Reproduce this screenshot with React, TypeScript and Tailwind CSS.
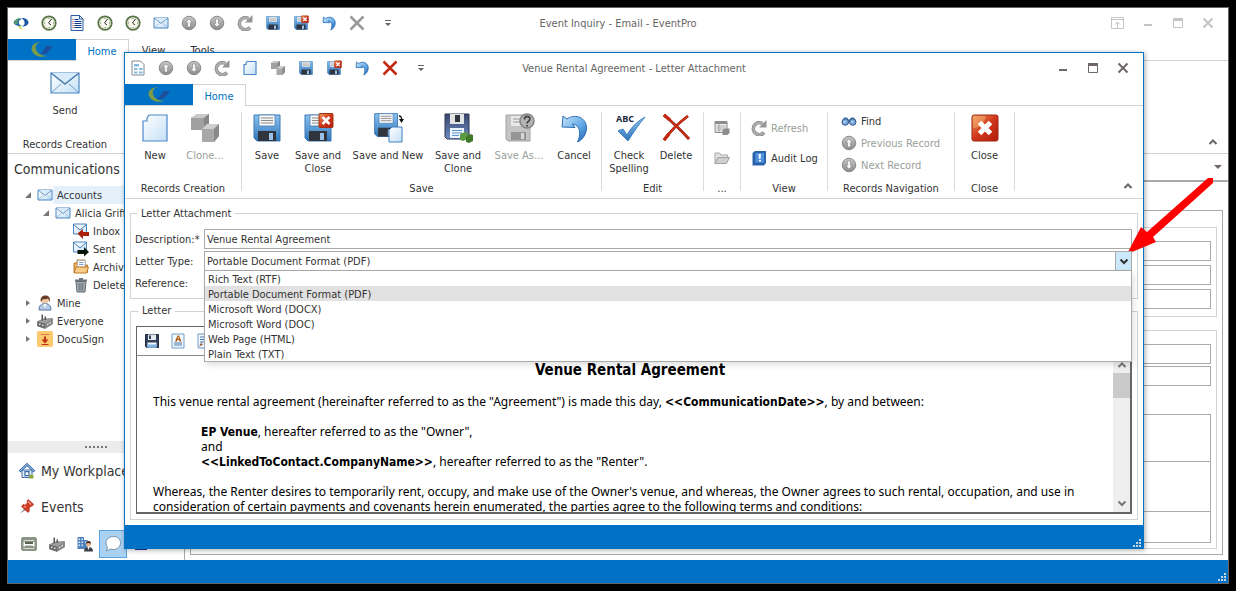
import { ReactNode } from 'react';
import clsx from 'clsx';

interface IconProps {
  size?: number;
  gray?: boolean;
}

interface SvgProps {
  size?: number;
  box?: number;
  children: ReactNode;
}

const Svg = ({ size = 16, box = 32, children }: SvgProps) => (
  <svg width={size} height={size} viewBox={`0 0 ${box} ${box}`} fill="none" aria-hidden="true" className="shrink-0">
    {children}
  </svg>
);

// Gradients shared by every icon on the page
const IconDefs = () => (
  <svg width="0" height="0" className="absolute" aria-hidden="true">
    <defs>
      <linearGradient id="blue" x1="0" y1="0" x2="0" y2="1">
        <stop offset="0" stopColor="#8cc4f2" />
        <stop offset="1" stopColor="#2f74b8" />
      </linearGradient>
      <linearGradient id="sheet" x1="0" y1="0" x2="1" y2="1">
        <stop offset="0" stopColor="#ffffff" />
        <stop offset="1" stopColor="#c4e0f6" />
      </linearGradient>
      <linearGradient id="gray" x1="0" y1="0" x2="0" y2="1">
        <stop offset="0" stopColor="#c8c8c8" />
        <stop offset="1" stopColor="#8a8a8a" />
      </linearGradient>
      <linearGradient id="navy" x1="0" y1="0" x2="0" y2="1">
        <stop offset="0" stopColor="#39456a" />
        <stop offset="1" stopColor="#6d8cc4" />
      </linearGradient>
      <linearGradient id="red" x1="0" y1="0" x2="1" y2="1">
        <stop offset="0" stopColor="#f0a060" />
        <stop offset="0.5" stopColor="#d0351a" />
        <stop offset="1" stopColor="#b01c0c" />
      </linearGradient>
      <linearGradient id="swoosh" x1="0" y1="0" x2="1" y2="1">
        <stop offset="0" stopColor="#c4e4fc" />
        <stop offset="0.6" stopColor="#5ea6e4" />
        <stop offset="1" stopColor="#1c5ca8" />
      </linearGradient>
    </defs>
  </svg>
);

const blueFloppy = (
  <>
    <path d="M3 3h26v26H6l-3-3z" fill="url(#blue)" stroke="#3a76b4" />
    <path d="M8 3h16v11H8z" fill="#f6f6f6" stroke="#3a76b4" strokeWidth="0.7" />
    <path d="M10 6h12M10 8.500h12M10 11h12" stroke="#8c8c8c" />
    <path d="M7 19h18v10H7z" fill="#30343c" />
    <path d="M18 21h4v7h-4z" fill="#9cbfe4" />
  </>
);

const Floppy = ({ size }: IconProps) => <Svg size={size}>{blueFloppy}</Svg>;

const FloppyClose = ({ size }: IconProps) => (
  <Svg size={size}>
    {blueFloppy}
    <rect x="17" y="1.500" width="14" height="14" rx="1" fill="url(#red)" stroke="#a33010" />
    <path d="M20.500 5l7 7M27.500 5l-7 7" stroke="#fff" strokeWidth="2.600" />
  </Svg>
);

const FloppyNew = ({ size }: IconProps) => (
  <Svg size={size}>
    <g transform="translate(0 -1) scale(.88)">{blueFloppy}</g>
    <path d="M20 15h10v15H17V18z" fill="url(#sheet)" stroke="#3f7cc0" />
    <path d="M27 4q3 0 2.500 4" stroke="#111" strokeWidth="1.400" />
    <path d="M27 7h5l-2.500 4z" fill="#111" />
  </Svg>
);

const FloppyClone = ({ size }: IconProps) => (
  <Svg size={size}>
    <path d="M3 2h24v25H5l-2-2z" fill="url(#navy)" stroke="#2c3658" />
    <path d="M8 2h14v10H8z" fill="#e4e4e4" />
    <path d="M13 3h5v7h-5z" fill="#30343c" />
    <path d="M8 16h14v10H8z" fill="#eef5fc" />
    <path d="M10 18.500h10M10 21h10M10 23.500h7" stroke="#5e95d0" />
    <path d="M18 22l5-2 3 1v6l-5 2-3-1z" fill="#5b9a40" />
    <path d="M24 25l4-3 3 1v6l-4 2-3-1z" fill="#3f7a2a" />
  </Svg>
);

const FloppyAsk = ({ size }: IconProps) => (
  <Svg size={size}>
    <path d="M3 3h24v26H5l-2-2z" fill="#c4c4c4" stroke="#a2a2a2" />
    <path d="M8 4h14v10H8z" fill="#e9e9e9" />
    <path d="M10 7h9M10 10h9" stroke="#9a9a9a" />
    <path d="M8 20h15v8H8z" fill="#959595" />
    <path d="M18 21h3v6h-3z" fill="#d8d8d8" />
    <circle cx="24" cy="9" r="7" fill="#b4b4b4" stroke="#848484" strokeWidth="1.500" />
    <path d="M21.500 7.500q0-3 2.700-3t2.600 2.600q0 1.600-1.500 2.400-1.200.7-1.200 2M24.100 13v1.600" stroke="#444" strokeWidth="1.800" />
  </Svg>
);

const FloppyDark = ({ size }: IconProps) => (
  <Svg size={size}>
    <path d="M3 3h26v26H5l-2-2z" fill="#33415a" stroke="#222c40" strokeWidth="2" />
    <path d="M8 3h16v11H8z" fill="#e6e9ee" />
    <path d="M10 5h4v7h-4z" fill="#33415a" />
    <path d="M7 19h18v10H7z" fill="#f5f8fc" />
    <path d="M7 23h18v6H7z" fill="#7db4e6" />
  </Svg>
);

const Undo = ({ size }: IconProps) => (
  <Svg size={size}>
    <path
      d="M4 15L5 4l4 3C18 1 28.500 6 28.500 16c0 6-4 12-9 14C23 23 23 13 14.500 12L17 15.500z"
      fill="url(#swoosh)"
      stroke="#2c6cb4"
      strokeLinejoin="round"
      strokeWidth={size ? 1 : 1.6}
    />
  </Svg>
);

const Cross = ({ size, gray }: IconProps) => (
  <Svg size={size}>
    {size ? (
      <>
        <path d="M4 3C11 9 21 18 29 27M28 4C20 10 9 21 4 28" stroke="#7d1408" strokeWidth="2.800" />
        <path d="M4 3C11 9 21 18 29 27M28 4C20 10 9 21 4 28" stroke="#d83014" strokeWidth="1.600" />
        <path d="M4 3l6 5M4 28l5-6" stroke="#c42810" strokeWidth="3.500" />
      </>
    ) : (
      <path d="M3 3l26 26M29 3L3 29" stroke={gray ? '#999' : '#c42a12'} strokeWidth="5" />
    )}
  </Svg>
);

const ArrowDisc = ({ down = false }: { down?: boolean }) => (
  <Svg>
    <circle cx="16" cy="16" r="13.500" fill="url(#gray)" stroke="#8a8a8a" strokeWidth="2" />
    <path
      d={down ? 'M16 24l-7-7h4V8h6v9h4z' : 'M16 8l7 7h-4v9h-6v-9H9z'}
      fill="#f3f3f3"
      stroke="#7a7a7a"
    />
  </Svg>
);

const Refresh = () => (
  <Svg>
    <path d="M26 25A12 12 0 1 1 23 7" stroke="#858585" strokeWidth="7" />
    <path d="M26 25A12 12 0 1 1 23 7" stroke="#adadad" strokeWidth="4.500" />
    <path d="M31 0v15H16z" fill="#959595" />
  </Svg>
);

const Sheet = ({ size }: IconProps) => (
  <Svg size={size}>
    <path d="M10 3h18v26H4V9h4V6l2-3z" fill="url(#sheet)" stroke="#4c88c8" strokeWidth={size ? 1.2 : 2.4} />
  </Svg>
);

const Cubes = ({ size }: IconProps) => (
  <Svg size={size}>
    <path d="M2 6l6-4h12v11l-5 5H2z" fill="#a0a0a0" />
    <path d="M2 6l6-4h12l-5 4z" fill="#c9c9c9" />
    <path d="M15 6l5-4v11l-5 5z" fill="#868686" />
    <path d="M13 17l5-5h12v12l-5 6H13z" fill="#a8a8a8" />
    <path d="M13 17l5-5h12l-5 5z" fill="#cecece" />
    <path d="M25 17l5-5v12l-5 6z" fill="#8a8a8a" />
  </Svg>
);

const Envelope = ({ size = 16 }: IconProps) => (
  <Svg size={size}>
    <path d="M2 6h28v20H2z" fill="url(#sheet)" stroke="#4a86c0" strokeWidth={size > 20 ? 1.2 : 2} />
    <path d="M3 25l9-8M29 25l-9-8" stroke="#6f9fce" />
    <path d="M2 6l14 11L30 6" fill="#d8ebfa" stroke="#4a7cae" strokeWidth="1.500" />
  </Svg>
);

const EnvelopeArrow = ({ out = false }: { out?: boolean }) => (
  <Svg>
    <path d="M1 2h26v20H1z" fill="url(#sheet)" stroke="#4a86c0" strokeWidth="2" />
    <path d="M1 3l13 11L27 3" stroke="#4a7cae" strokeWidth="2" />
    <path
      d={out ? 'M32 22L22 12v6H9v8h13v5z' : 'M9 21l11-9v6h12v8H20v6z'}
      fill={out ? '#0a140a' : '#a8200c'}
    />
  </Svg>
);

const Clock = () => (
  <Svg>
    <circle cx="16" cy="16" r="13.500" fill="#f8f8ee" stroke="#5c7548" strokeWidth="3.500" />
    <circle cx="16" cy="16" r="10.500" stroke="#a9b894" />
    <path d="M21 8l-6 8 5 4" stroke="#333" strokeWidth="2" />
    <path d="M16 6v2M16 24v2M6 16h2M24 16h2" stroke="#666" strokeWidth="1.500" />
  </Svg>
);

const ListDoc = () => (
  <Svg>
    <path d="M4 1h17l7 7v23H4z" fill="#f4f9fe" stroke="#2b5ca4" strokeWidth="2" />
    <path d="M21 1v7h7" stroke="#2b5ca4" strokeWidth="2" />
    <path d="M11 9h8M11 13h14M11 17h14M11 21h14M11 25h14" stroke="#143c8c" strokeWidth="2" />
    <path d="M7 9h2M7 13h2M7 17h2M7 21h2M7 25h2" stroke="#b03020" strokeWidth="2" />
  </Svg>
);

const EditDoc = () => (
  <Svg>
    <path d="M4 2h24v28H4z" fill="#f2f8fe" stroke="#6f9cc8" strokeWidth="2" />
    <path d="M8 8h14M8 13h14M8 18h10" stroke="#4878b0" strokeWidth="2" />
    <path d="M6 27l4-7 4 3z" fill="#8c4a24" />
  </Svg>
);

const FormDoc = () => (
  <Svg>
    <path d="M4 2h17l7 7v21H4z" fill="#fff" stroke="#7f8a90" strokeWidth="2" />
    <path d="M8 8h10v5H8zM8 16h7v4H8zM18 16h7v4h-7zM8 23h7v4H8zM18 23h7v4h-7z" fill="#86b9e0" />
  </Svg>
);

const Swirl = () => (
  <Svg>
    <path d="M1 15C4 8 14 5 21 8c-7 0-10 4-9 8 1 3 4 5 8 5-10 2-17 0-19-6z" fill="#2a6cb0" />
    <path d="M17 6c8-1 14 4 14 9s-6 8-14 8c5-2 7-5 6-9-1-4-3-6-6-8z" fill="#1c58a0" />
    <path d="M1 15C3 9 9 6 15 6 9 9 8 14 9 18c-4 0-7-1-8-3z" fill="#5c9c6c" />
    <path d="M13 13c2-3 8-2 9 1s-2 7-6 7c-3-1-5-5-3-8z" fill="#fff" />
    <path d="M10 22c2 5 6 7 11 7-4-2-6-4-6-7z" fill="#d4d040" />
  </Svg>
);

const TabLogo = () => (
  <svg width="24" height="18" viewBox="0 0 24 18" aria-hidden="true">
    <path d="M11 1C5 1 0 5 2 10c2 5 9 7 15 5-6 0-10-3-11-7C5 5 7 2 11 1z" fill="#7e9c48" />
    <path d="M14 9l2-4h7l-3 4zM10 13l4-4h6l-4 4z" fill="#1c4f9c" />
  </svg>
);

const CloseTile = () => (
  <Svg size={32}>
    <rect x="3" y="3" width="26" height="26" rx="2" fill="url(#red)" stroke="#9c2410" />
    <path d="M4 16q10 1 13-12H4z" fill="#f4b070" opacity=".5" />
    <path d="M10.500 10.500l11 11M21.500 10.500l-11 11" stroke="#fff" strokeWidth="5" />
  </Svg>
);

const SpellCheck = () => (
  <svg width="32" height="32" viewBox="0 0 32 32" aria-hidden="true">
    <text x="3" y="10" fontSize="9" fontWeight="bold" fill="#1c2740" fontFamily="Open Sans, sans-serif">ABC</text>
    <path d="M5 19l5-2 4 6C19 14 25 9 32 5 26 12 20 21 15 29z" fill="url(#blue)" stroke="#3f80c4" />
  </svg>
);

const Binoculars = () => (
  <Svg>
    <path d="M6 9h6l3 4h2l3-4h6l4 9H2z" fill="#4470a4" />
    <circle cx="8.500" cy="18" r="6.500" fill="#7aa9dc" stroke="#34578a" strokeWidth="2" />
    <circle cx="23.500" cy="18" r="6.500" fill="#7aa9dc" stroke="#34578a" strokeWidth="2" />
    <path d="M6 16h3v3H6zM21 16h3v3h-3z" fill="#d4e8fa" />
  </Svg>
);

const AuditBook = () => (
  <Svg>
    <path d="M3 6l5-4h22v24l-4 5H3z" fill="#2d64ac" />
    <path d="M8 5h19v21H8z" fill="#4f92dc" stroke="#1f4f92" />
    <path d="M15 8h5l-1 10h-3zM16 20h4v3h-4z" fill="#fff" />
  </Svg>
);

const GrayTable = () => (
  <Svg>
    <path d="M2 3h24v22H2z" fill="#eee" stroke="#8c8c8c" strokeWidth="2" />
    <path d="M2 3h24v5H2z" fill="#8c8c8c" />
    <path d="M5 12h18M5 16h18M5 20h12M10 8v16" stroke="#9c9c9c" strokeWidth="1.500" />
    <path d="M17 20l4-3h10v9l-4 4H17z" fill="#8c8c8c" />
  </Svg>
);

const GrayFolder = () => (
  <Svg>
    <path d="M2 27V6h9l3 4h13v5" fill="#e2e2e2" stroke="#a6a6a6" strokeWidth="2" />
    <path d="M2 27l6-12h23l-6 12z" fill="#cfcfcf" stroke="#a0a0a0" strokeWidth="2" />
  </Svg>
);

const OrangeFolder = () => (
  <Svg>
    <path d="M2 27V8h6v-6h16v10h5v15z" fill="#f0b060" stroke="#bc7a2c" strokeWidth="2" />
    <path d="M9 3h15v13H9z" fill="#fff" stroke="#7a9ec4" />
    <path d="M12 7h9M12 11h9" stroke="#7aa4d4" strokeWidth="2" />
    <path d="M2 28l4-12h25l-4 12z" fill="#f8cc88" stroke="#bc7a2c" strokeWidth="2" />
  </Svg>
);

const Bin = () => (
  <Svg>
    <path d="M6 9h20l-2 21H8z" fill="#a4acb2" stroke="#5f686e" strokeWidth="2" />
    <path d="M4 5h24v4H4zM12 2h8v3h-8z" fill="#6c757c" />
    <path d="M12 12l1 15M16 12v15M20 12l-1 15" stroke="#5f686e" strokeWidth="1.600" />
  </Svg>
);

const Person = () => (
  <Svg>
    <path d="M4 30c0-9 5-13 12-13s12 4 12 13z" fill="#b9cce6" stroke="#5473a0" strokeWidth="2" />
    <circle cx="16" cy="10" r="7" fill="#eec8a4" />
    <path d="M8 15C5 4 12 1 17 1s11 3 8 14c-1-4-2-6-3-8-4 2-9 1-11 2-1 2-2 3-3 6z" fill="#6c3c28" />
    <path d="M13 18l3 8 3-8z" fill="#fff" />
  </Svg>
);

const Factory = () => (
  <Svg>
    <path d="M1 17l12-5 18-1v11l-15 9-15-5z" fill="#a0a0a0" stroke="#555" />
    <path d="M1 17l15 4v10L1 26z" fill="#6a6a6a" />
    <path d="M16 21l15-10v11l-15 9z" fill="#888" />
    <path d="M9 3h3v12H9zM15 7h3v7h-3z" fill="#555" />
    <path d="M4 21h3v3H4zM10 23h3v3h-3zM20 22l3-2v3l-3 2zM25 19l3-2v3l-3 2z" fill="#e2e2e2" />
  </Svg>
);

const DocuSign = () => (
  <Svg>
    <rect x="0" y="0" width="32" height="32" rx="3" fill="#fccb70" />
    <path d="M7 7h18" stroke="#dc8050" strokeWidth="2" />
    <path d="M14 11h4v6h5l-7 8-7-8h5zM9 26h14v2H9z" fill="#c03018" />
  </Svg>
);

const House = () => (
  <Svg>
    <path d="M6 14h20v15H6z" fill="#e4effa" stroke="#3c6ca8" strokeWidth="2" />
    <path d="M1 17L16 3l15 14" stroke="#3c6ca8" strokeWidth="5" />
    <path d="M1 17L16 3l15 14" stroke="#a4c8ec" strokeWidth="2" />
    <path d="M12 17h8v8h-8z" fill="#fff" stroke="#3c6ca8" strokeWidth="2.500" />
    <path d="M20 24h9v7h-9z" fill="#8ea83c" />
  </Svg>
);

const Pin = () => (
  <Svg>
    <path d="M2 29l10-11 3 3z" fill="#8c8c8c" />
    <path d="M18 1l11 9-2 4-4 1-3 5 1 4-3 3L5 15l3-4 5 1 4-5-1-3z" fill="#d43c24" stroke="#941c10" />
    <path d="M18 5l6 6M10 14l4 3" stroke="#f49c84" strokeWidth="2.500" />
  </Svg>
);

const Bed = () => (
  <Svg>
    <rect x="1" y="3" width="30" height="26" rx="3" fill="#8b9484" stroke="#59624f" />
    <path d="M5 8h22v2H5zM5 24h22v2H5z" fill="#d6dccf" />
    <path d="M5 12h3v9H5zM24 12h3v9h-3zM8 16h16v3H8z" fill="#fff" />
    <path d="M8 12h16v4H8z" fill="#59624f" />
  </Svg>
);

const Office = () => (
  <Svg>
    <path d="M1 2h13v24H1zM14 8h7v18h-7z" fill="#4f81bc" />
    <path d="M3 5h3v3H3zM9 5h3v3H9zM3 11h3v3H3zM9 11h3v3H9zM3 17h3v3H3zM9 17h3v3H9zM16 11h3v3h-3z" fill="#dcecfa" />
    <circle cx="23" cy="16" r="5" fill="#e8b48c" />
    <path d="M18 15q0-5 5-5t5 5q-5-2-10 0z" fill="#3c2418" />
    <path d="M14 31q0-9 9-9t9 9z" fill="#3a3f48" />
    <path d="M21 22l2 6 2-6z" fill="#fff" />
  </Svg>
);

const Bubble = () => (
  <Svg>
    <path d="M17 1c8 0 14 5 14 12.500S25 27 17 27c-2 0-4 0-6-1l-8 4 2-8C3 20 2 17 2 13.500 2 6 9 1 17 1z" fill="#fff" stroke="#5c7890" strokeWidth="1.500" />
  </Svg>
);

const FontDoc = () => (
  <Svg>
    <path d="M4 2h24v28H4z" fill="#f2f8fe" stroke="#6f9cc8" strokeWidth="2" />
    <path d="M15 5h3l5 12h-4l-1-3h-3l-1 3h-4zM15 11h3l-1.500-4z" fill="#b05c10" />
    <path d="M8 20h16M8 24h16" stroke="#4878b0" strokeWidth="2" />
  </Svg>
);

const Minimize = () => (
  <Svg size={12} box={12}>
    <path d="M2 7h8v2H2z" fill="currentColor" />
  </Svg>
);

const Maximize = () => (
  <Svg size={12} box={12}>
    <path d="M1.500 1.500h9v9h-9z" stroke="currentColor" />
    <path d="M1 1h10v3H1z" fill="currentColor" />
  </Svg>
);

const CloseX = () => (
  <Svg size={12} box={12}>
    <path d="M1.500 1.500l9 9M10.500 1.500l-9 9" stroke="currentColor" strokeWidth="2" />
  </Svg>
);

const Restore = () => (
  <Svg size={14} box={14}>
    <path d="M.5 1.500h12v11H.5zM.5 3.500h12M6.500 12V6M4 8.500L6.500 6 9 8.500" stroke="currentColor" />
  </Svg>
);

const QuickMore = () => (
  <Svg size={8} box={8}>
    <path d="M1 1h6v1H1zM1 4h6L4 7z" fill="#666" />
  </Svg>
);

const Chevron = ({ up = false }: { up?: boolean }) => (
  <Svg size={10} box={10}>
    <path d={up ? 'M1.500 7L5 3.500 8.500 7' : 'M1.500 3.500L5 7l3.500-3.500'} stroke="currentColor" strokeWidth="2" />
  </Svg>
);

const Grip = () => (
  <Svg size={8} box={8}>
    <path d="M6 0h2v2H6zM3 3h2v2H3zM6 3h2v2H6zM0 6h2v2H0zM3 6h2v2H3zM6 6h2v2H6z" fill="#c9d6de" />
  </Svg>
);

interface TitleBarProps {
  title: string;
  icons: { name: string; icon: ReactNode }[];
  controls: { name: string; icon: ReactNode }[];
  active?: boolean;
}

const TitleBar = ({ title, icons, controls, active = false }: TitleBarProps) => (
  <header className="grid h-[31px] shrink-0 grid-cols-[1fr_auto_1fr] items-center">
    <div className="flex items-center pb-px">
      {icons.map(({ name, icon }, i) => (
        <button key={i} aria-label={name} className="flex w-7 justify-start pl-[5px]">
          {icon}
        </button>
      ))}
      <button aria-label="Customize toolbar" className="flex w-8 justify-center">
        <QuickMore />
      </button>
    </div>
    <h1 className="text-[#666]">{title}</h1>
    <div className={clsx('flex justify-end pr-[5px] pb-px', active ? 'text-[#6f6767]' : 'text-[#c4c4c4]')}>
      {controls.map(({ name, icon }) => (
        <button key={name} aria-label={name} className="flex w-[30px] items-center justify-center">
          {icon}
        </button>
      ))}
    </div>
  </header>
);

interface TabStripProps {
  tabs: string[];
}

const TabStrip = ({ tabs }: TabStripProps) => (
  <nav className="flex h-[22px] shrink-0 border-b border-[#d2d2d2]">
    <button aria-label="Application menu" className="flex w-[68px] items-center justify-center bg-[#0072c6]">
      <TabLogo />
    </button>
    {tabs.map((tab, i) => (
      <button
        key={tab}
        className={clsx(
          'flex h-[22px] items-center justify-center pt-px',
          i === 0 ? 'w-[53px] border-t border-r border-[#d2d2d2] bg-white text-[#0072c6]' : 'w-[49px]',
        )}
      >
        {tab}
      </button>
    ))}
  </nav>
);

interface RibbonGroupProps {
  caption: string;
  className?: string;
  children: ReactNode;
}

const RibbonGroup = ({ caption, className, children }: RibbonGroupProps) => (
  <section className={clsx('flex shrink-0 flex-col justify-between border-r border-[#dcdcdc]', className)}>
    {children}
    <h2 className="-mb-1 text-center leading-[13px]">{caption}</h2>
  </section>
);

interface BigButtonProps {
  icon: ReactNode;
  label: string;
  className: string;
  disabled?: boolean;
}

const BigButton = ({ icon, label, className, disabled }: BigButtonProps) => (
  <button disabled={disabled} className={clsx('flex flex-col items-center gap-[5px] text-center leading-[13px] disabled:text-[#9aa09a]', className)}>
    {icon}
    <span>{label}</span>
  </button>
);

interface SmallButtonProps {
  icon: ReactNode;
  label: string;
  disabled?: boolean;
}

const SmallButton = ({ icon, label, disabled }: SmallButtonProps) => (
  <button disabled={disabled} className="flex h-4 items-center gap-1 whitespace-nowrap disabled:text-[#9aa09a]">
    {icon}
    <span>{label}</span>
  </button>
);

const tree = [
  { label: 'Accounts', level: 0, icon: <Envelope />, state: 'open', selected: true },
  { label: 'Alicia Griffin', level: 1, icon: <Envelope />, state: 'open' },
  { label: 'Inbox', level: 2, icon: <EnvelopeArrow /> },
  { label: 'Sent', level: 2, icon: <EnvelopeArrow out /> },
  { label: 'Archive', level: 2, icon: <OrangeFolder /> },
  { label: 'Deleted', level: 2, icon: <Bin /> },
  { label: 'Mine', level: 0, icon: <Person />, state: 'closed' },
  { label: 'Everyone', level: 0, icon: <Factory />, state: 'closed' },
  { label: 'DocuSign', level: 0, icon: <DocuSign />, state: 'closed' },
];

const indent = ['pl-4', 'pl-[34px]', 'pl-[52px]'];

const Sidebar = () => (
  <aside className="flex w-[177px] shrink-0 flex-col border-r border-[#aaa]">
    <h2 className="px-1.5 pt-[5px] pb-px text-[14px] leading-5">Communications</h2>
    <ul className="flex-1 pt-1.5">
      {tree.map(({ label, level, icon, state, selected }) => (
        <li key={label} className={clsx('flex h-[18px] items-center', indent[level])}>
          <span className="flex w-[13px] shrink-0 pl-px">
            {state && (
              <Svg size={6} box={6}>
                <path d={state === 'open' ? 'M6 0v6H0z' : 'M1 0l4 3-4 3z'} fill="#777" />
              </Svg>
            )}
          </span>
          {icon}
          <span className={clsx('flex h-full flex-1 items-center pl-1', selected && 'bg-[#e4f1fb]')}>{label}</span>
        </li>
      ))}
    </ul>
    <div className="flex h-3 items-center justify-center gap-0.5 bg-[#ececec]">
      {[0, 1, 2, 3, 4, 5].map((dot) => (
        <span key={dot} className="size-0.5 bg-[#777]" />
      ))}
    </div>
    <button className="flex h-9 items-center gap-1.5 pl-[11px] text-[14px]">
      <House />
      My Workplace
    </button>
    <button className="flex h-9 items-center gap-1.5 pl-[11px] text-[14px]">
      <Pin />
      Events
    </button>
    <div className="flex h-[35px] items-center pt-0.5 pl-[7px]">
      {[<Bed />, <Factory />, <Office />, <Bubble />].map((icon, i) => (
        <button
          key={i}
          aria-label={['Rooms', 'Companies', 'Contacts', 'Communications'][i]}
          className={clsx('flex size-7 items-center justify-center', i === 3 && 'border border-[#5aa5e6] bg-[#a9d1f2]')}
        >
          {icon}
        </button>
      ))}
      <span className="ml-2 size-3 bg-[#2c3c9c]" />
    </div>
  </aside>
);

const mainQuick = [
  { name: 'EventPro', icon: <Swirl /> },
  { name: 'Recent', icon: <Clock /> },
  { name: 'Report', icon: <ListDoc /> },
  { name: 'Reminders', icon: <Clock /> },
  { name: 'Schedule', icon: <Clock /> },
  { name: 'Email', icon: <Envelope /> },
  { name: 'Previous', icon: <ArrowDisc /> },
  { name: 'Next', icon: <ArrowDisc down /> },
  { name: 'Refresh', icon: <Refresh /> },
  { name: 'Save', icon: <Floppy /> },
  { name: 'Save and Close', icon: <FloppyClose /> },
  { name: 'Undo', icon: <Undo /> },
  { name: 'Delete', icon: <Cross gray /> },
];

const dialogQuick = [
  { name: 'Form', icon: <FormDoc /> },
  { name: 'Previous', icon: <ArrowDisc /> },
  { name: 'Next', icon: <ArrowDisc down /> },
  { name: 'Refresh', icon: <Refresh /> },
  { name: 'New', icon: <Sheet /> },
  { name: 'Clone', icon: <Cubes /> },
  { name: 'Save', icon: <Floppy /> },
  { name: 'Save and Close', icon: <FloppyClose /> },
  { name: 'Cancel', icon: <Undo /> },
  { name: 'Delete', icon: <Cross /> },
];

const windowControls = [
  { name: 'Minimize', icon: <Minimize /> },
  { name: 'Maximize', icon: <Maximize /> },
  { name: 'Close window', icon: <CloseX /> },
];

const MainWindow = () => (
  <div className="flex min-h-0 flex-1 flex-col border border-[#666] bg-white">
    <TitleBar
      title="Event Inquiry - Email - EventPro"
      icons={mainQuick}
      controls={[{ name: 'Full screen', icon: <Restore /> }, ...windowControls]}
    />
    <TabStrip tabs={['Home', 'View', 'Tools']} />
    <div className="flex h-[93px] shrink-0 items-end justify-between border-b border-[#d2d2d2] pt-1.5">
      <div className="flex h-full w-[114px] flex-col items-center justify-between">
        <BigButton icon={<Envelope size={32} />} label="Send" className="w-12" />
        <span className="pb-0.5">Records Creation</span>
      </div>
      <span className="p-2.5 pb-1.5 text-[#666]">
        <Chevron up />
      </span>
    </div>
    <div className="flex min-h-0 flex-1">
      <Sidebar />
      <main className="flex flex-1 flex-col">
        <div className="flex h-7 shrink-0 items-center justify-end border-b-2 border-[#aaa] pr-1.5">
          <Svg size={8} box={8}>
            <path d="M0 2h8L4 6z" fill="#6f6767" />
          </Svg>
        </div>
        <div className="mx-[5px] mt-7 mb-[5px] flex flex-1 flex-col gap-[13px] border border-[#aaa] px-[5px] pt-4 pb-[5px]">
          <div className="flex flex-col gap-1 border border-[#d2d2d2] px-[5px] pt-[13px] pb-[7px]">
            <input aria-label="From" className="h-5 border border-[#aaa]" />
            <input aria-label="To" className="h-5 border border-[#aaa]" />
            <input aria-label="Subject" className="h-5 border border-[#aaa]" />
          </div>
          <div className="flex flex-1 flex-col border border-[#d2d2d2] px-[5px] pt-[13px] pb-[5px]">
            <input aria-label="Category" className="h-5 shrink-0 border border-[#aaa]" />
            <input aria-label="Status" className="mt-0.5 h-5 shrink-0 border border-[#aaa]" />
            <div className="mt-7 grid flex-1 grid-rows-[47px_50px_1fr] divide-y divide-[#aaa] border border-[#aaa]">
              <div />
              <div />
              <div />
            </div>
          </div>
        </div>
      </main>
    </div>
    <footer className="flex h-[23px] shrink-0 items-end justify-end bg-[#0072c6] p-0.5">
      <Grip />
    </footer>
  </div>
);

const letterTypes = [
  'Rich Text (RTF)',
  'Portable Document Format (PDF)',
  'Microsoft Word (DOCX)',
  'Microsoft Word (DOC)',
  'Web Page (HTML)',
  'Plain Text (TXT)',
];

const LetterForm = () => (
  <fieldset className="mx-[5px] mt-2 h-[92px] border border-[#d2d2d2] pt-[9px] pr-[5px] pl-1">
    <legend className="ml-0.5 px-1 leading-[13px]">Letter Attachment</legend>
    <div className="grid grid-cols-[69px_1fr] items-center gap-y-0.5">
      <label htmlFor="description">Description:*</label>
      <input id="description" defaultValue="Venue Rental Agreement" className="h-5 border border-[#aaa] px-0.5" />
      <label htmlFor="letter-type">Letter Type:</label>
      <div className="relative z-10">
        <select
          id="letter-type"
          defaultValue={letterTypes[1]}
          className="block h-5 w-full appearance-none border border-[#aaa] bg-white px-0.5"
        >
          {letterTypes.map((type) => (
            <option key={type}>{type}</option>
          ))}
        </select>
        <span className="pointer-events-none absolute inset-y-0 right-0 flex w-[17px] items-center justify-center border border-[#aaa] bg-[#cce8fb] text-[#333]">
          <Chevron />
        </span>
        <ul className="absolute top-full right-0 left-0 border border-t-0 border-[#aaa] bg-white shadow-[2px_3px_6px_rgba(0,0,0,0.12)]">
          {letterTypes.map((type, i) => (
            <li key={type} className={clsx('h-[15px] px-[3px] leading-[17px]', i === 1 && 'bg-[#e1e1e1]')}>
              {type}
            </li>
          ))}
        </ul>
      </div>
      <label htmlFor="reference">Reference:</label>
      <input id="reference" className="h-5 border border-[#aaa] px-0.5" />
    </div>
  </fieldset>
);

const LetterEditor = () => (
  <fieldset className="mx-[5px] mt-[5px] mb-[5px] flex min-h-0 flex-1 flex-col border border-[#d2d2d2] px-[5px] pt-2 pb-[5px]">
    <legend className="ml-0.5 px-1 leading-[14px]">Letter</legend>
    <div className="flex min-h-0 flex-1 flex-col border border-r-2 border-b-2 border-[#666]">
      <div className="flex h-7 shrink-0 items-center gap-2.5 pl-[7px]">
        <button aria-label="Save letter"><FloppyDark /></button>
        <button aria-label="Font"><FontDoc /></button>
        <button aria-label="Edit"><EditDoc /></button>
      </div>
      <div className="flex min-h-0 flex-1 border-t border-[#888]">
        <article className="min-h-0 flex-1 overflow-hidden px-4 pt-1 font-['Noto_Sans',sans-serif] text-[12px] leading-[15px] text-black [&_b]:font-['DejaVu_Sans_Condensed',sans-serif]">
          <h2 className="mb-3.5 pl-2.5 text-center font-['DejaVu_Sans_Condensed',sans-serif] text-[15px] leading-5 font-bold">Venue Rental Agreement</h2>
          <p className="mb-[15px] h-[15px]">
            This venue rental agreement (hereinafter referred to as the "Agreement") is made this day, <b>&lt;&lt;CommunicationDate&gt;&gt;</b>, by and between:
          </p>
          <p className="h-[15px] pl-12">
            <b>EP Venue</b>, hereafter referred to as the "Owner",
          </p>
          <p className="h-[15px] pl-12">and</p>
          <p className="mb-[15px] h-[15px] pl-12">
            <b>&lt;&lt;LinkedToContact.CompanyName&gt;&gt;</b>, hereafter referred to as the "Renter".
          </p>
          <p>
            Whereas, the Renter desires to temporarily rent, occupy, and make use of the Owner's venue, and whereas, the Owner agrees to such rental, occupation, and use in
            consideration of certain payments and covenants herein enumerated, the parties agree to the following terms and conditions:
          </p>
        </article>
        <div className="flex w-[17px] flex-col items-center bg-[#efefef] py-1 text-[#777]">
          <Chevron up />
          <div className="mt-[3px] h-[25px] w-full bg-[#cacaca]" />
          <div className="mt-auto">
            <Chevron />
          </div>
        </div>
      </div>
    </div>
  </fieldset>
);

const Ribbon = () => (
  <div className="flex h-[93px] shrink-0 border-b border-[#d2d2d2] pt-1.5 pb-[7px]">
    <RibbonGroup caption="Records Creation" className="w-[117px]">
      <div className="flex pl-[5px]">
        <BigButton icon={<Sheet size={32} />} label="New" className="w-[50px]" />
        <BigButton icon={<Cubes size={32} />} label="Clone..." className="w-[50px]" disabled />
      </div>
    </RibbonGroup>
    <RibbonGroup caption="Save" className="w-[360px]">
      <div className="flex pl-0.5">
        <BigButton icon={<Floppy size={32} />} label="Save" className="w-[46px]" />
        <BigButton icon={<FloppyClose size={32} />} label="Save and Close" className="w-[56px]" />
        <BigButton icon={<FloppyNew size={32} />} label="Save and New" className="w-[84px]" />
        <BigButton icon={<FloppyClone size={32} />} label="Save and Clone" className="w-[56px]" />
        <BigButton icon={<FloppyAsk size={32} />} label="Save As..." className="w-[66px]" disabled />
        <BigButton icon={<Undo size={32} />} label="Cancel" className="w-[44px]" />
      </div>
    </RibbonGroup>
    <RibbonGroup caption="Edit" className="w-[102px]">
      <div className="flex pl-1">
        <BigButton icon={<SpellCheck />} label="Check Spelling" className="w-[46px]" />
        <BigButton icon={<Cross size={32} />} label="Delete" className="w-[48px]" />
      </div>
    </RibbonGroup>
    <RibbonGroup caption="..." className="w-[37px]">
      <div className="flex flex-col items-center gap-3.5 pt-2">
        <button aria-label="Layout" disabled><GrayTable /></button>
        <button aria-label="Open" disabled><GrayFolder /></button>
      </div>
    </RibbonGroup>
    <RibbonGroup caption="View" className="w-[87px]">
      <div className="flex flex-col gap-3.5 pt-2 pl-2.5">
        <SmallButton icon={<Refresh />} label="Refresh" disabled />
        <SmallButton icon={<AuditBook />} label="Audit Log" />
      </div>
    </RibbonGroup>
    <RibbonGroup caption="Records Navigation" className="w-[127px]">
      <div className="flex flex-col gap-1.5 pt-px pl-[13px]">
        <SmallButton icon={<Binoculars />} label="Find" />
        <SmallButton icon={<ArrowDisc />} label="Previous Record" disabled />
        <SmallButton icon={<ArrowDisc down />} label="Next Record" disabled />
      </div>
    </RibbonGroup>
    <RibbonGroup caption="Close" className="w-[60px]">
      <BigButton icon={<CloseTile />} label="Close" className="w-full" />
    </RibbonGroup>
    <button aria-label="Collapse ribbon" className="ml-auto self-end pr-2.5 text-[#666]">
      <Chevron up />
    </button>
  </div>
);

const LetterDialog = () => (
  <div
    role="dialog"
    aria-label="Letter Attachment"
    className="absolute top-[52px] right-[92px] bottom-[42px] left-[124px] flex flex-col border border-b-0 border-[#0072c6] bg-white shadow-[1px_1px_5px_rgba(0,0,0,0.35)]"
  >
    <TitleBar title="Venue Rental Agreement - Letter Attachment" icons={dialogQuick} controls={windowControls} active />
    <TabStrip tabs={['Home']} />
    <Ribbon />
    <LetterForm />
    <LetterEditor />
    <footer className="flex h-6 shrink-0 items-end justify-end bg-[#0072c6] p-0.5">
      <Grip />
    </footer>
  </div>
);

export default function App() {
  return (
    <div className="relative flex h-screen flex-col overflow-hidden bg-black p-[7px] font-['DejaVu_Sans_Condensed','Noto_Sans',sans-serif] text-[11px] leading-[13px] text-[#333]">
      <IconDefs />
      <MainWindow />
      <LetterDialog />
      {/* Pointer to the open drop-down */}
      <svg width="88" height="78" viewBox="0 0 88 78" className="absolute top-[177px] right-[21px]" aria-hidden="true">
        <path d="M0 77L14 50l6 5L81 1h5v5L26 60l3 5z" fill="#f00" />
      </svg>
    </div>
  );
}
